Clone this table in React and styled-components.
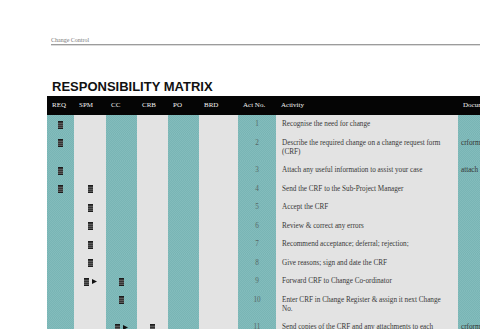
import React from 'react'
import styled, { createGlobalStyle } from 'styled-components'

const GlobalStyle = createGlobalStyle`
  html, body {
    margin: 0;
    padding: 0;
    background: #ffffff;
    overflow: hidden;
  }
  body {
    font-family: "Liberation Serif", "Times New Roman", serif;
  }
`;

const columns = ['REQ', 'SPM', 'CC', 'CRB', 'PO', 'BRD', 'Act No.', 'Activity', 'Documents'];
const roles = ['REQ', 'SPM', 'CC', 'CRB', 'PO', 'BRD'];

const rows = [
  { no: 1, text: 'Recognise the need for change', marks: { REQ: 'doc' } },
  { no: 2, text: 'Describe the required change on a change request form (CRF)', marks: { REQ: 'doc' }, doc: 'crform' },
  { no: 3, text: 'Attach any useful information to assist your case', marks: { REQ: 'doc' }, doc: 'attach' },
  { no: 4, text: 'Send the CRF to the Sub-Project Manager', marks: { REQ: 'doc', SPM: 'doc' } },
  { no: 5, text: 'Accept the CRF', marks: { SPM: 'doc' } },
  { no: 6, text: 'Review & correct any errors', marks: { SPM: 'doc' } },
  { no: 7, text: 'Recommend acceptance; deferral; rejection;', marks: { SPM: 'doc' } },
  { no: 8, text: 'Give reasons; sign and date the CRF', marks: { SPM: 'doc' } },
  { no: 9, text: 'Forward CRF to Change Co-ordinator', marks: { SPM: 'send', CC: 'doc' } },
  { no: 10, text: 'Enter CRF in Change Register & assign it next Change No.', marks: { CC: 'doc' } },
  { no: 11, text: 'Send copies of the CRF and any attachments to each', marks: { CC: 'send', CRB: 'doc' }, doc: 'crform' },
];

export default function App() {
  return (
    <Page>
      <GlobalStyle />
      <RunningHead>Change Control</RunningHead>
      <Title>RESPONSIBILITY MATRIX</Title>
      <Matrix>
        <HeadRow>
          {columns.map((c) => (
            <HeadCell key={c}>{c}</HeadCell>
          ))}
        </HeadRow>
        {rows.map((r) => (
          <Row key={r.no}>
            {roles.map((role, i) => (
              <Cell key={role} $teal={i % 2 === 0}>
                {r.marks[role] && (
                  <Mark>
                    <DocIcon />
                    {r.marks[role] === 'send' && <Arrow />}
                  </Mark>
                )}
              </Cell>
            ))}
            <NumCell $teal>{r.no}</NumCell>
            <ActivityCell>{r.text}</ActivityCell>
            <DocCell $teal>{r.doc}</DocCell>
          </Row>
        ))}
      </Matrix>
    </Page>
  )
}

function DocIcon() {
  return (
    <svg width="5" height="8" viewBox="0 0 5 8">
      <rect x="0" y="0" width="5" height="8" fill="#1c1c1c" />
      <rect x="0" y="1.8" width="5" height="0.7" fill="#9a9a9a" />
      <rect x="0" y="3.8" width="5" height="0.7" fill="#9a9a9a" />
      <rect x="0" y="5.8" width="5" height="0.7" fill="#9a9a9a" />
    </svg>
  )
}

function Arrow() {
  return (
    <svg width="5" height="5" viewBox="0 0 5 5">
      <path d="M0 0 L5 2.5 L0 5 Z" fill="#111" />
    </svg>
  )
}

const Page = styled.div`
  width: 600px;
  padding: 36px 0 0 47px;
`;

const RunningHead = styled.div`
  margin-left: 4px;
  font-family: "Liberation Serif", serif;
  font-size: 6px;
  line-height: 8px;
  color: #777;
  border-bottom: 1px solid #9c9c9c;
  box-shadow: 0 1px 0 #dcdcdc;
`;

const Title = styled.h1`
  margin: 34px 0 2px 5px;
  font-family: "Liberation Sans", Arial, sans-serif;
  font-weight: bold;
  font-size: 13px;
  line-height: 15px;
  color: #111;
`;

const gridCols = '27px 32px 31px 31px 31px 39px 38px 182px 90px';

const Matrix = styled.div`
  display: flex;
  flex-direction: column;
`;

const HeadRow = styled.div`
  display: grid;
  grid-template-columns: ${gridCols};
  height: 19px;
  background: #050505;
`;

const HeadCell = styled.div`
  padding-left: 5px;
  font-size: 7px;
  line-height: 19px;
  color: #f2f2f2;
  white-space: nowrap;
  overflow: hidden;
`;

const Row = styled.div`
  display: grid;
  grid-template-columns: ${gridCols};
  font-size: 7.2px;
  line-height: 9px;
`;

const Cell = styled.div`
  display: flex;
  justify-content: center;
  align-items: flex-start;
  padding: 5px 0 4.5px;
  background-color: ${(p) => (p.$teal ? '#7db8b8' : '#e3e3e3')};
  background-image: ${(p) =>
    p.$teal
      ? 'repeating-conic-gradient(#79b5b5 0 25%, #83bcbc 0 50%)'
      : 'none'};
  background-size: 2px 2px;
`;

const Mark = styled.div`
  display: flex;
  align-items: center;
  gap: 3px;
  height: 9px;
`;

const NumCell = styled(Cell)`
  color: #566666;
`;

const ActivityCell = styled(Cell)`
  display: block;
  padding-left: 6px;
  padding-right: 12px;
  color: #383838;
`;

const DocCell = styled(Cell)`
  display: block;
  padding-left: 3px;
  color: #333;
  white-space: nowrap;
`;
